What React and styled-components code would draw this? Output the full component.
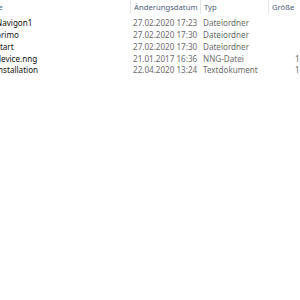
import React from "react"
import styled, { createGlobalStyle } from "styled-components"

const Global = createGlobalStyle`
  html, body { margin: 0; padding: 0; background: #fff; }
  body { width: 300px; height: 300px; overflow: hidden; font-family: "Noto Sans", "Open Sans", sans-serif; }
`

const Table = styled.div`
  width: 300px;
  height: 300px;
  overflow: hidden;
  background: #fff;
`

const Row = styled.div`
  display: grid;
  grid-template-columns: 130px 70px 68px 60px;
  height: ${p => (p.$head ? "14px" : "11.75px")};
  align-items: center;
  font-size: 8.1px;
  line-height: 11px;
  white-space: nowrap;
`

const Body = styled.div`
  padding-top: 3px;
`

const HeadCell = styled.div`
  color: #4c607a;
  font-size: 7.7px;
  padding-left: ${p => (p.$first ? "0" : "3px")};
  height: 14px;
  display: flex;
  align-items: center;
  overflow: hidden;
  border-left: ${p => (p.$first ? "none" : "1px solid #e5e5e5")};
`

const HeadName = styled.span`
  margin-left: -19px;
`

const Cell = styled.div`
  color: ${p => (p.$name ? "#141414" : "#6d6d6d")};
  padding-left: ${p => (p.$name ? "0" : "3px")};
  text-align: ${p => (p.$right ? "right" : "left")};
  padding-right: ${p => (p.$right ? "16px" : "0")};
  overflow: hidden;
`

const NameText = styled.span`
  display: inline-block;
  margin-left: -4px;
`

const files = [
  { name: "Navigon1", date: "27.02.2020 17:23", type: "Dateiordner", size: "" },
  { name: "primo", date: "27.02.2020 17:30", type: "Dateiordner", size: "" },
  { name: "start", date: "27.02.2020 17:30", type: "Dateiordner", size: "" },
  { name: "device.nng", date: "21.01.2017 16:36", type: "NNG-Datei", size: "1 KB" },
  { name: "installation", date: "22.04.2020 13:24", type: "Textdokument", size: "1 KB" },
]

const App = () => (
  <>
    <Global />
    <Table>
      <Row $head>
        <HeadCell $first><HeadName>Name</HeadName></HeadCell>
        <HeadCell>Änderungsdatum</HeadCell>
        <HeadCell>Typ</HeadCell>
        <HeadCell>Größe</HeadCell>
      </Row>
      <Body>
        {files.map(f => (
          <Row key={f.name}>
            <Cell $name><NameText>{f.name}</NameText></Cell>
            <Cell>{f.date}</Cell>
            <Cell>{f.type}</Cell>
            <Cell $right>{f.size}</Cell>
          </Row>
        ))}
      </Body>
    </Table>
  </>
)

export default App
